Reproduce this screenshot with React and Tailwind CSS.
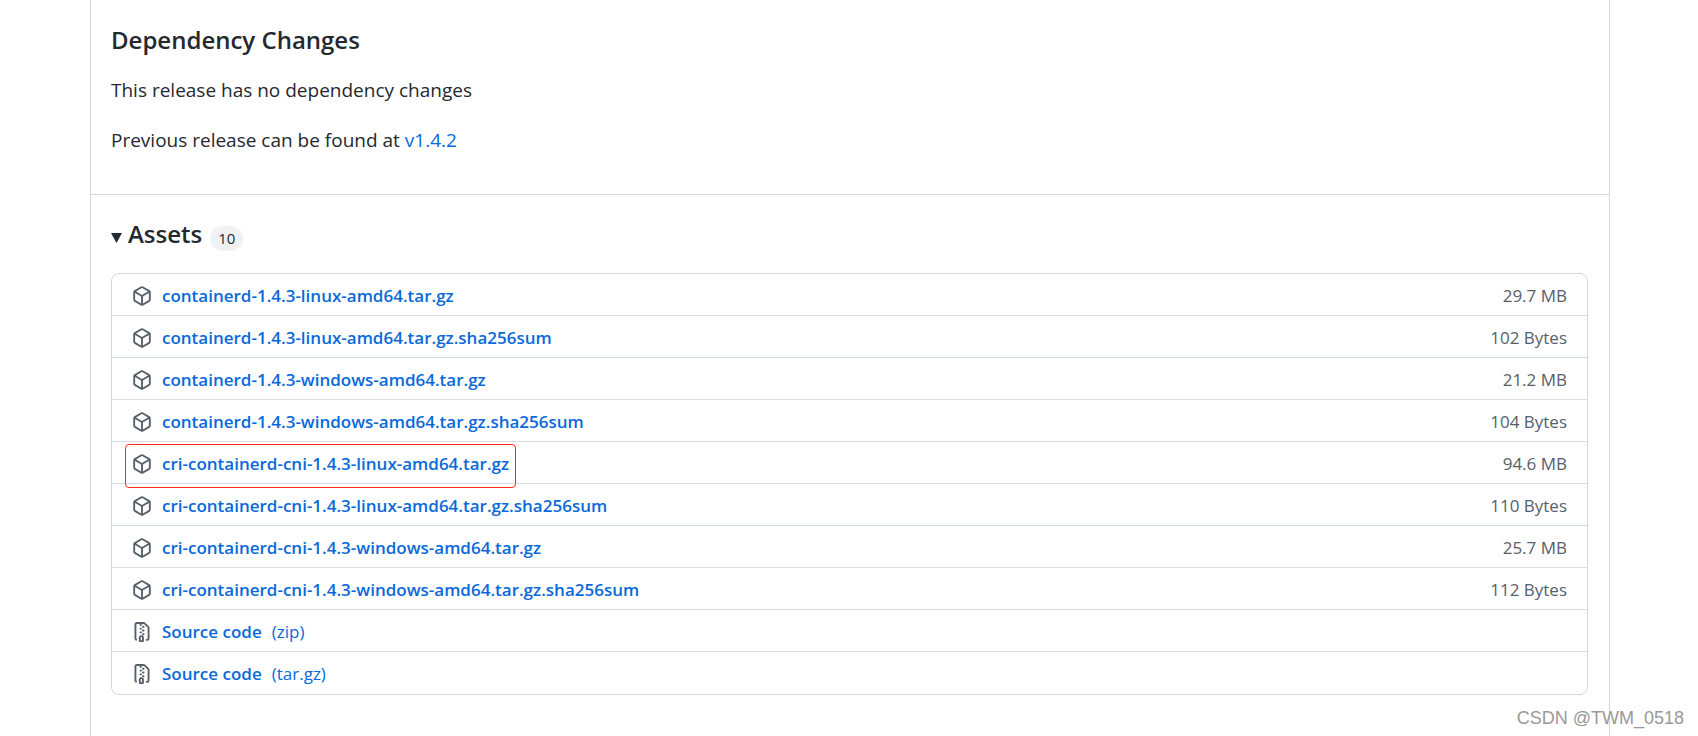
const assets = [
  { name: 'containerd-1.4.3-linux-amd64.tar.gz', size: '29.7 MB' },
  { name: 'containerd-1.4.3-linux-amd64.tar.gz.sha256sum', size: '102 Bytes' },
  { name: 'containerd-1.4.3-windows-amd64.tar.gz', size: '21.2 MB' },
  { name: 'containerd-1.4.3-windows-amd64.tar.gz.sha256sum', size: '104 Bytes' },
  { name: 'cri-containerd-cni-1.4.3-linux-amd64.tar.gz', size: '94.6 MB', highlighted: true },
  { name: 'cri-containerd-cni-1.4.3-linux-amd64.tar.gz.sha256sum', size: '110 Bytes' },
  { name: 'cri-containerd-cni-1.4.3-windows-amd64.tar.gz', size: '25.7 MB' },
  { name: 'cri-containerd-cni-1.4.3-windows-amd64.tar.gz.sha256sum', size: '112 Bytes' },
  { name: 'Source code', format: '(zip)' },
  { name: 'Source code', format: '(tar.gz)' },
];

function PackageIcon() {
  return (
    <svg viewBox="0 0 16 16" className="size-5 shrink-0 fill-[#57606a]" aria-hidden="true">
      <path d="m8.878.392 5.25 3.045c.54.314.872.89.872 1.514v6.098a1.75 1.75 0 0 1-.872 1.514l-5.25 3.045a1.75 1.75 0 0 1-1.756 0l-5.25-3.045A1.75 1.75 0 0 1 1 11.049V4.951c0-.624.332-1.201.872-1.514L7.122.392a1.75 1.75 0 0 1 1.756 0ZM7.875 1.69l-4.63 2.685L8 7.133l4.755-2.758-4.63-2.685a.248.248 0 0 0-.25 0ZM2.5 5.677v5.372c0 .09.047.171.125.216l4.625 2.683V8.432Zm6.25 8.271 4.625-2.683a.25.25 0 0 0 .125-.216V5.677L8.75 8.432Z" />
    </svg>
  );
}

function FileZipIcon() {
  return (
    <svg viewBox="0 0 16 16" className="size-5 shrink-0 fill-[#57606a]" aria-hidden="true">
      <path d="M3.5 1.75v11.5c0 .09.048.173.126.217a.75.75 0 0 1-.752 1.298A1.748 1.748 0 0 1 2 13.25V1.75C2 .784 2.784 0 3.75 0h5.586c.464 0 .909.185 1.237.513l2.914 2.914c.329.328.513.773.513 1.237v8.586A1.75 1.75 0 0 1 12.25 15h-.5a.75.75 0 0 1 0-1.5h.5a.25.25 0 0 0 .25-.25V4.664a.25.25 0 0 0-.073-.177L9.513 1.573a.25.25 0 0 0-.177-.073H7.25a.75.75 0 0 1 0 1.5h-.5a.75.75 0 0 1 0-1.5h-3a.25.25 0 0 0-.25.25Zm3.75 8.75h.5c.966 0 1.75.784 1.75 1.75v3a.75.75 0 0 1-.75.75h-2.5a.75.75 0 0 1-.75-.75v-3c0-.966.784-1.75 1.75-1.75ZM6 5.25a.75.75 0 0 1 .75-.75h.5a.75.75 0 0 1 0 1.5h-.5A.75.75 0 0 1 6 5.25Zm.75 2.25h.5a.75.75 0 0 1 0 1.5h-.5a.75.75 0 0 1 0-1.5ZM8 6.75A.75.75 0 0 1 8.75 6h.5a.75.75 0 0 1 0 1.5h-.5A.75.75 0 0 1 8 6.75ZM8.75 3h.5a.75.75 0 0 1 0 1.5h-.5a.75.75 0 0 1 0-1.5ZM8 9.75A.75.75 0 0 1 8.75 9h.5a.75.75 0 0 1 0 1.5h-.5A.75.75 0 0 1 8 9.75Zm-1 2.5v2.25h1v-2.25a.25.25 0 0 0-.25-.25h-.5a.25.25 0 0 0-.25.25Z" />
    </svg>
  );
}

function AssetRow({ asset }) {
  return (
    <li className="flex items-center justify-between px-5 pt-[9px] pb-[7px] last:pb-2">
      <div className="relative flex items-center gap-2.5">
        {asset.format ? <FileZipIcon /> : <PackageIcon />}
        <a href="#" className="flex gap-2.5 leading-[25px] text-[#0969da]">
          <span className="font-semibold">{asset.name}</span>
          {asset.format && <span>{asset.format}</span>}
        </a>
        {asset.highlighted && (
          <span className="pointer-events-none absolute -inset-x-[7px] -top-[7px] -bottom-3 rounded-sm border border-[#ff2a1a]" />
        )}
      </div>
      {asset.size && <span className="leading-[25px] text-[#57606a]">{asset.size}</span>}
    </li>
  );
}

function App() {
  return (
    <div className="relative min-h-screen bg-white pr-[88px] pl-[90px] font-['Open_Sans','Noto_Sans',sans-serif] text-[#24292f]">
      <main className="min-h-screen border-x border-[#d0d7de]">
        <section className="border-b border-[#d0d7de] px-5 pt-[25px] pb-[39px] text-[19px] leading-[30px]">
          <h3 className="text-2xl leading-[30px] font-semibold">Dependency Changes</h3>
          <p className="mt-5">This release has no dependency changes</p>
          <p className="mt-5">
            Previous release can be found at <a href="#" className="text-[#0969da]">v1.4.2</a>
          </p>
        </section>

        <details open className="group pt-[21px] pr-[21px] pb-10 pl-5">
          <summary className="flex cursor-pointer list-none items-center">
            <svg viewBox="0 0 11 10" className="mt-2 mr-1.5 h-2.5 w-[11px] -rotate-90 fill-[#24292f] group-open:rotate-0" aria-hidden="true">
              <path d="M0 0h11L5.500 10Z" />
            </svg>
            <h3 className="text-2xl leading-[35px] font-semibold">Assets</h3>
            <span className="mt-2.5 ml-2 rounded-full bg-[#eff1f3] px-2 text-[15px] leading-[25px]">10</span>
          </summary>
          <ul className="mt-[22px] divide-y divide-[#d8dee4] rounded-lg border border-[#d0d7de] text-[17px]">
            {assets.map((asset) => (
              <AssetRow key={asset.name + (asset.format || '')} asset={asset} />
            ))}
          </ul>
        </details>
      </main>
      <span className="absolute right-3.5 bottom-1.5 font-['Liberation_Sans',sans-serif] text-lg leading-6 text-[#999]">
        CSDN @TWM_0518
      </span>
    </div>
  );
}

export default App;
